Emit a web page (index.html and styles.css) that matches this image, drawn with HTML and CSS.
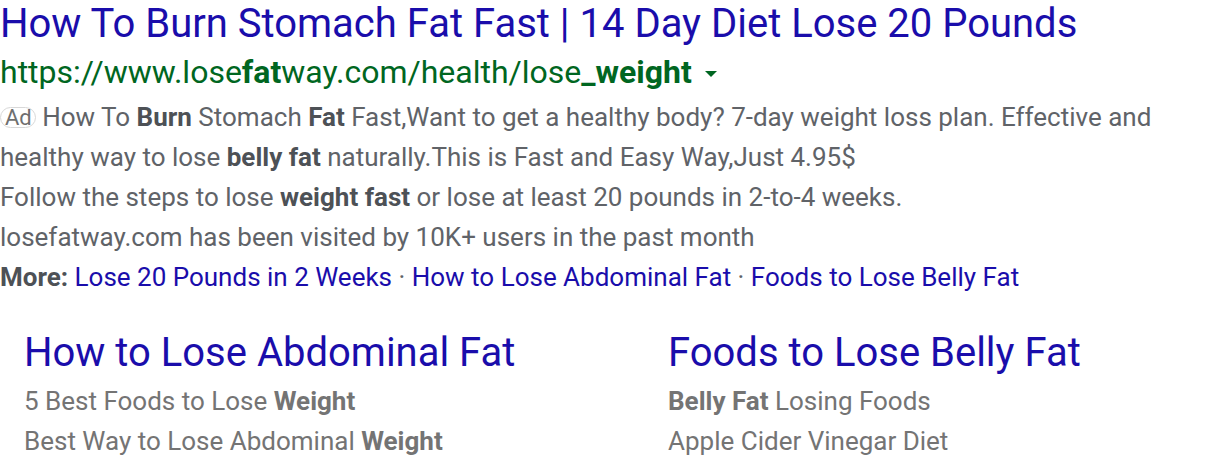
FILE: index.html
```html
<!DOCTYPE html>
<html lang="en">
<head>
<meta charset="utf-8">
<title>Ad result</title>
<link rel="stylesheet" href="styles.css">
</head>
<body>
<div class="ad">
  <div class="title"><a href="#">How To Burn Stomach Fat Fast | 14 Day Diet Lose 20 Pounds</a></div>
  <div class="url">https://www.lose<b>fat</b>way.com/health/lose<b>_weight</b><span class="caret"></span></div>
  <div class="snippet">
    <p class="desc">
      <span class="line"><span class="badge">Ad</span> How To <b>Burn</b> Stomach <b>Fat</b> Fast,Want to get a healthy body? 7-day weight loss plan. Effective and</span>
      <span class="line">healthy way to lose <b>belly fat</b> naturally.This is Fast and Easy Way,Just 4.95$</span>
    </p>
    <p>Follow the steps to lose <b>weight fast</b> or lose at least 20 pounds in 2-to-4 weeks.</p>
    <p class="visits">losefatway.com has been visited by 10K+ users in the past month</p>
    <p class="more"><b>More:</b> <a href="#">Lose 20 Pounds in 2 Weeks</a> · <a href="#">How to Lose Abdominal Fat</a> · <a href="#">Foods to Lose Belly Fat</a></p>
  </div>
  <div class="sitelinks">
    <div class="sitelink">
      <a class="sl-title" href="#">How to Lose Abdominal Fat</a>
      <div class="sl-line">5 Best Foods to Lose <b>Weight</b></div>
      <div class="sl-line">Best Way to Lose Abdominal <b>Weight</b></div>
    </div>
    <div class="sitelink">
      <a class="sl-title" href="#">Foods to Lose Belly Fat</a>
      <div class="sl-line"><b>Belly Fat</b> Losing Foods</div>
      <div class="sl-line">Apple Cider Vinegar Diet</div>
    </div>
  </div>
</div>
</body>
</html>
```

FILE: styles.css
```css
html, body {
  margin: 0;
  padding: 0;
  background: #ffffff;
}

body {
  font-family: Roboto, "Liberation Sans", Arial, sans-serif;
}

a {
  color: #1a0dab;
  text-decoration: none;
}

.ad {
  width: 1216px;
}

.title {
  font-size: 40px;
  line-height: 48px;
  white-space: nowrap;
}

.url {
  font-size: 32px;
  line-height: 48px;
  color: #006621;
  white-space: nowrap;
}

.url b {
  font-weight: 700;
}

.caret {
  display: inline-block;
  width: 0;
  height: 0;
  margin-left: 13px;
  border-left: 6px solid transparent;
  border-right: 6px solid transparent;
  border-top: 6px solid #006621;
  vertical-align: middle;
  position: relative;
  top: -1px;
}

.snippet {
  font-size: 26px;
  line-height: 40px;
  color: #606368;
  padding-top: 1px;
}

.snippet p {
  margin: 0;
}

.snippet .line {
  display: block;
  white-space: nowrap;
}

.snippet b {
  color: #4d5156;
  font-weight: 700;
}

.badge {
  display: inline-block;
  font-size: 22px;
  line-height: 19px;
  padding: 0 3px 0 4px;
  border: 1.5px solid #d8d8d8;
  border-radius: 11px;
  color: #6f6f6f;
  vertical-align: middle;
  position: relative;
  top: -2px;
}

.sitelinks {
  display: grid;
  grid-template-columns: 644px 1fr;
  padding-left: 24px;
  margin-top: 32px;
}

.sitelink {
  display: flex;
  flex-direction: column;
}

.sl-title {
  font-size: 40px;
  line-height: 48px;
  margin-bottom: 4px;
  white-space: nowrap;
}

.sl-line {
  font-size: 26px;
  line-height: 40px;
  color: #747474;
  white-space: nowrap;
}

.sl-line b {
  font-weight: 700;
}
```
